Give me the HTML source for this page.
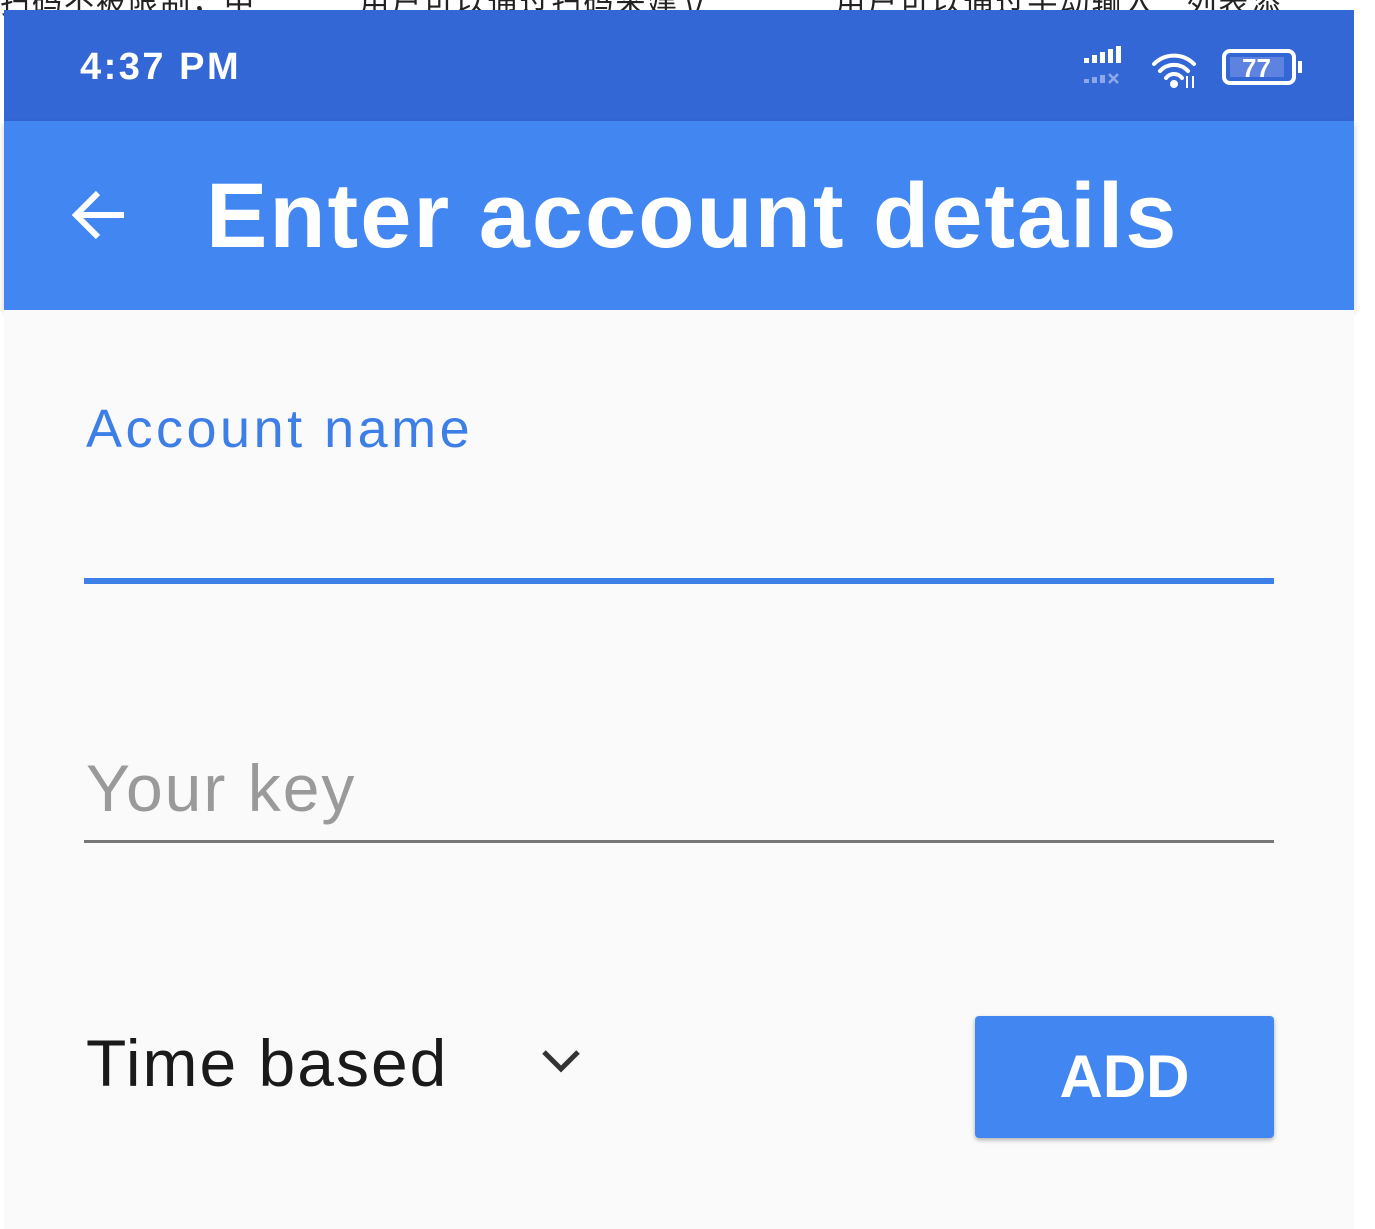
<!DOCTYPE html>
<html><head><style>
body{margin:0;width:1375px;height:1229px;background:#fff;position:relative;overflow:hidden;font-family:"Liberation Sans","Noto Sans CJK SC",sans-serif}
.top{position:absolute;left:0;top:-22px;font-size:30px;color:#222;white-space:nowrap;letter-spacing:2px}
.status{position:absolute;left:4px;top:10px;width:1350px;height:111px;background:#3467d6}
.bar{position:absolute;left:4px;top:121px;width:1350px;height:189px;background:#4286f2;box-shadow:0 3px 6px rgba(0,0,0,.2)}
.content{position:absolute;left:4px;top:310px;width:1350px;height:919px;background:#fafafa}
.abs{position:absolute;white-space:nowrap}
</style></head><body>
<div class="top">扫码不被限制，中 &nbsp;&nbsp;&nbsp;&nbsp;&nbsp;&nbsp;&nbsp;&nbsp; 用户可以通过扫码来建立 &nbsp;&nbsp;&nbsp;&nbsp;&nbsp;&nbsp;&nbsp;&nbsp;&nbsp;&nbsp; 用户可以通过手动输入 &nbsp; 列表添</div>
<div class="status"></div>
<div class="abs" style="left:80px;top:46px;color:#fff;font-size:38px;font-weight:bold;letter-spacing:2.5px">4:37 PM</div>
<svg class="abs" style="left:1080px;top:46px" width="230" height="44" viewBox="0 0 230 44">
<g fill="#fff"><rect x="4" y="12" width="5" height="5"/><rect x="12" y="9" width="5" height="8"/><rect x="20" y="6" width="5" height="11"/><rect x="28" y="3" width="5" height="14"/><rect x="36" y="0" width="5" height="17"/></g>
<g fill="#8fa9e8"><rect x="4" y="33" width="5" height="4"/><rect x="12" y="31" width="5" height="6"/><rect x="20" y="29" width="5" height="8"/><path d="M29 28l9 9M38 28l-9 9" stroke="#8fa9e8" stroke-width="2.5"/></g>
<g fill="none" stroke="#fff" stroke-width="4" stroke-linecap="round"><path d="M74 18a28 28 0 0 1 40 0"/><path d="M80 25a19 19 0 0 1 28 0"/><path d="M86 32a10 10 0 0 1 16 0"/></g>
<circle cx="94" cy="38" r="4" fill="#fff"/>
<path d="M107 30v12M113 30v12" stroke="#fff" stroke-width="2"/>
<rect x="144" y="5" width="70" height="32" rx="6" fill="none" stroke="#fff" stroke-width="4"/>
<rect x="150" y="11" width="54" height="20" fill="#5d82e0"/>
<rect x="218" y="15" width="4" height="12" fill="#fff"/>
<text x="162" y="31" fill="#fff" font-size="26" font-weight="bold" font-family="Liberation Sans">77</text>
</svg>
<div class="bar"></div>
<svg class="abs" style="left:68px;top:187px" width="62" height="56" viewBox="0 0 62 56"><path d="M56 28H8M30 6L8 28l22 22" fill="none" stroke="#fff" stroke-width="6"/></svg>
<div class="abs" style="left:206px;top:164px;color:#fff;font-size:92px;font-weight:bold;letter-spacing:2px">Enter account details</div>
<div class="content"></div>
<div class="abs" style="left:86px;top:398px;color:#3d7fe6;font-size:54px;letter-spacing:3.5px">Account name</div>
<div class="abs" style="left:84px;top:578px;width:1190px;height:6px;background:#3d80e8"></div>
<div class="abs" style="left:86px;top:750px;color:#9a9a9a;font-size:66px;letter-spacing:2px">Your key</div>
<div class="abs" style="left:84px;top:840px;width:1190px;height:3px;background:#777"></div>
<div class="abs" style="left:86px;top:1025px;color:#1a1a1a;font-size:66px;letter-spacing:2px">Time based</div>
<svg class="abs" style="left:540px;top:1046px" width="42" height="30" viewBox="0 0 42 30"><path d="M4 6l17 17L38 6" fill="none" stroke="#333" stroke-width="5"/></svg>
<div class="abs" style="left:975px;top:1016px;width:299px;height:122px;background:#4286f2;border-radius:4px;box-shadow:0 2px 5px rgba(0,0,0,.3);color:#fff;font-size:60px;font-weight:bold;text-align:center;line-height:122px">ADD</div>
</body></html>
